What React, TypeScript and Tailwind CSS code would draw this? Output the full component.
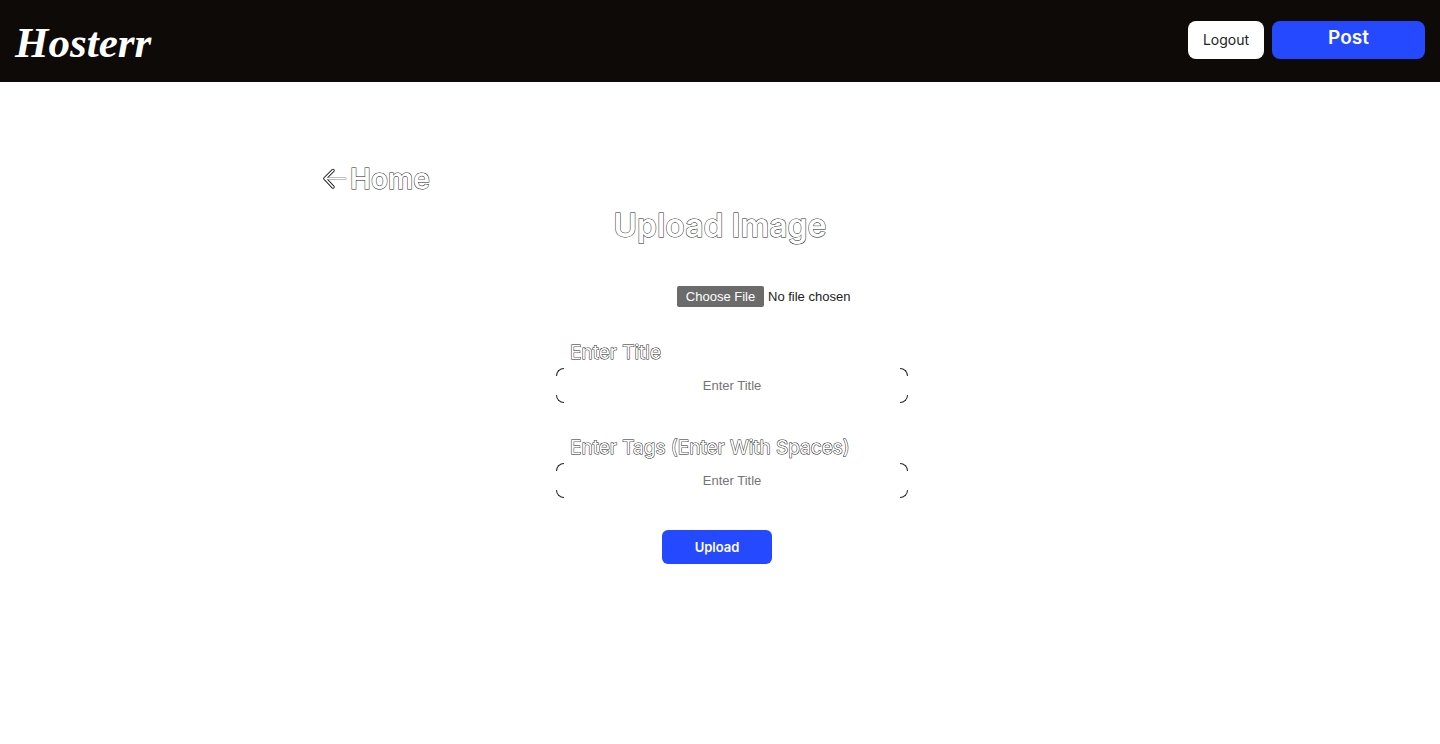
const outline =
  "text-white [-webkit-text-stroke:1px_#222] [paint-order:stroke_fill]";

function Corners() {
  const base = "pointer-events-none absolute size-2 border-[#222]";
  return (
    <>
      <span className={`${base} top-0 left-0 rounded-tl-lg border-t border-l`} />
      <span className={`${base} top-0 right-0 rounded-tr-lg border-t border-r`} />
      <span className={`${base} bottom-0 left-0 rounded-bl-lg border-b border-l`} />
      <span className={`${base} right-0 bottom-0 rounded-br-lg border-r border-b`} />
    </>
  );
}

function Field({ id, label }: { id: string; label: string }) {
  return (
    <div className="flex flex-col">
      <label htmlFor={id} className={`pl-[14px] text-[19px] leading-[30px] font-normal ${outline}`}>
        {label}
      </label>
      <div className="relative">
        <input
          id={id}
          type="text"
          placeholder="Enter Title"
          className="block h-[35px] w-full rounded-lg bg-white px-3 text-center font-['Liberation_Sans',sans-serif] text-[13px] text-black outline-none placeholder:text-[#757575]"
        />
        <Corners />
      </div>
    </div>
  );
}

export default function App() {
  return (
    <div className="min-h-screen bg-white font-['Inter',sans-serif]">
      <header className="flex h-[82px] items-center justify-between bg-[#0d0a07] px-[15px]">
        <a
          href="#"
          className="pt-1 font-['Liberation_Serif',serif] text-[43px] leading-[48px] font-bold text-white italic"
        >
          Hosterr
        </a>
        <nav className="flex gap-2 pb-0.5">
          <button type="button" className="h-[38px] w-[76px] rounded-lg bg-white text-sm text-[#222]">
            Logout
          </button>
          <button
            type="button"
            className="h-[38px] w-[153px] rounded-lg bg-[#2449ff] pb-1 text-[19px] font-semibold text-white"
          >
            Post
          </button>
        </nav>
      </header>
      <main className="mx-auto max-w-[800px] pt-20">
        <a href="#" className={`flex w-fit items-center text-[28px] leading-[34px] font-semibold ${outline}`}>
          <svg width="30" height="28" viewBox="0 0 30 28" fill="none" aria-hidden="true">
            <path d="M5 13.500h20" stroke="#aaa" strokeWidth="3" strokeLinecap="round" />
            <path d="M13 5.500 5 13.500l8 8.500" stroke="#222" strokeWidth="3.500" strokeLinecap="round" strokeLinejoin="round" />
            <path d="M13 5.500 5 13.500l8 8.500M5 13.500h20" stroke="#fff" strokeWidth="1.700" strokeLinecap="round" strokeLinejoin="round" />
          </svg>
          Home
        </a>
        <h1 className={`mt-2.5 text-center text-[32px] leading-10 font-semibold ${outline}`}>Upload Image</h1>
        <form className="flex flex-col items-center pt-10 pl-6">
          <div className="flex w-[352px] flex-col">
            <input
              type="file"
              aria-label="Choose image"
              className="ml-[121px] h-[21px] w-[231px] font-['Liberation_Sans',sans-serif] text-[13px] leading-[21px] text-[#222] file:mr-1 file:h-[21px] file:w-[87px] file:rounded-xs file:bg-[#6b6b6b] file:px-0 file:text-center file:text-white"
            />
            <div className="flex flex-col gap-[30px] pt-[31px]">
              <Field id="title" label="Enter Title" />
              <Field id="tags" label="Enter Tags (Enter With Spaces)" />
            </div>
            <button
              type="button"
              className="mt-8 ml-[106px] h-[34px] w-[110px] rounded-md bg-[#2449ff] pt-0.5 text-[13px] font-semibold text-white"
            >
              Upload
            </button>
          </div>
        </form>
      </main>
    </div>
  );
}
